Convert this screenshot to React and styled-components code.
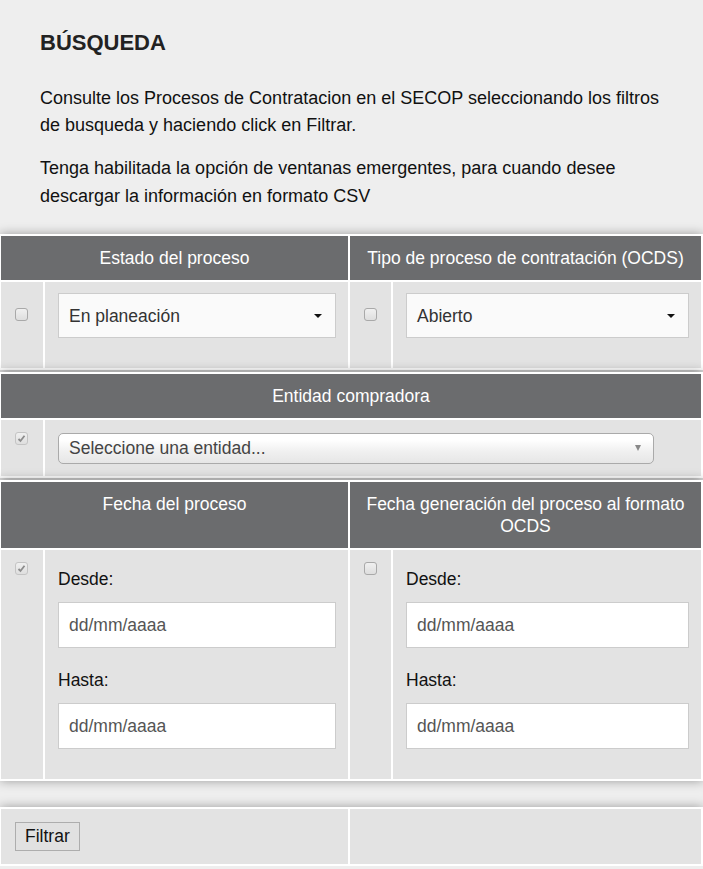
import styled, { createGlobalStyle } from "styled-components";

const GlobalStyle = createGlobalStyle`
  body {
    margin: 0;
    background: #eeeeee;
    font-family: "Liberation Sans", Arial, sans-serif;
    color: #111;
  }
`;

const Intro = styled.div`
  padding: 30px 40px 24px;
`;

const Title = styled.h2`
  margin: 0 0 29px;
  font-size: 22px;
  line-height: 26px;
  font-weight: bold;
  color: #222;
`;

const Text = styled.p`
  margin: 0 0 16px;
  font-size: 18px;
  line-height: 27.2px;
  &:last-child {
    margin-bottom: 0;
  }
`;

const Panel = styled.div`
  display: grid;
  grid-template-columns: 42px 303px 41px 1fr;
  gap: 2px;
  padding: 2px 2px 2px 1px;
  background: #fff;
  box-shadow: 0 0 10px rgba(0, 0, 0, 0.35);
  margin-top: ${(p) => p.$space || 0}px;
  position: relative;
`;

const Head = styled.div`
  grid-column: span ${(p) => p.$span || 2};
  background: #6b6c6e;
  color: #fff;
  text-align: center;
  font-size: 17.5px;
  line-height: 22px;
  padding: 11px 10px;
`;

const CheckCell = styled.div`
  background: #e3e3e3;
  padding: ${(p) => p.$top || 12}px 0 0 14px;
`;

const Cell = styled.div`
  grid-column: span ${(p) => p.$span || 1};
  background: #e3e3e3;
  padding: ${(p) => p.$pad || "11px 12px 30px 13px"};
`;

const Box = styled.span`
  display: block;
  width: 13px;
  height: 13px;
  box-sizing: border-box;
  border: 1px solid ${(p) => (p.$checked ? "#c4c4c4" : "#a9a9a9")};
  border-radius: 3px;
  background: linear-gradient(#f0f0f0, #dedede);
  svg {
    display: block;
  }
`;

const Dropdown = styled.div`
  height: 45px;
  box-sizing: border-box;
  border: 1px solid #cccccc;
  background: #fafafa;
  display: flex;
  align-items: center;
  justify-content: space-between;
  padding: 2px 13px 0 10px;
  font-size: 17.5px;
  color: #333;
`;

const Caret = styled.span`
  width: 0;
  height: 0;
  border-left: 4px solid transparent;
  border-right: 4px solid transparent;
  border-top: 4px solid #111;
`;

const EntitySelect = styled.div`
  width: 596px;
  height: 31px;
  box-sizing: border-box;
  border: 1px solid #aaaaaa;
  border-radius: 5px;
  background: linear-gradient(#ffffff 20%, #f0f0f0 60%, #e6e6e6);
  display: flex;
  align-items: center;
  justify-content: space-between;
  padding: 0 12px 0 10px;
  font-size: 17.5px;
  color: #444;
`;

const SmallArrow = styled.span`
  width: 0;
  height: 0;
  border-left: 3.5px solid transparent;
  border-right: 3.5px solid transparent;
  border-top: 6px solid #888;
`;

const Label = styled.div`
  margin: ${(p) => (p.$first ? 18 : 21)}px 0 12px;
  font-size: 17.5px;
  line-height: 22px;
  color: #111;
`;

const DateInput = styled.div`
  height: 46px;
  box-sizing: border-box;
  border: 1px solid #cccccc;
  background: #fff;
  display: flex;
  align-items: center;
  padding: 1px 10px 0;
  font-size: 17.5px;
  color: #555;
`;

const Button = styled.button`
  height: 29px;
  padding: 0 9px;
  border: 1px solid #adadad;
  background: #e1e1e1;
  font-family: "Liberation Sans", Arial, sans-serif;
  font-size: 17.5px;
  color: #111;
`;

function Check({ checked }) {
  return (
    <Box $checked={checked}>
      {checked && (
        <svg width="11" height="11" viewBox="0 0 11 11">
          <path d="M2.5 6 L4.5 8 L8.5 2.8" fill="none" stroke="#8c8c8c" strokeWidth="1.8" />
        </svg>
      )}
    </Box>
  );
}

function DateField() {
  return (
    <>
      <Label $first>Desde:</Label>
      <DateInput>dd/mm/aaaa</DateInput>
      <Label>Hasta:</Label>
      <DateInput>dd/mm/aaaa</DateInput>
    </>
  );
}

export default function App() {
  return (
    <>
      <GlobalStyle />
      <Intro>
        <Title>BÚSQUEDA</Title>
        <Text>
          Consulte los Procesos de Contratacion en el SECOP seleccionando los filtros de busqueda y
          haciendo click en Filtrar.
        </Text>
        <Text>
          Tenga habilitada la opción de ventanas emergentes, para cuando desee descargar la
          información en formato CSV
        </Text>
      </Intro>

      <Panel>
        <Head>Estado del proceso</Head>
        <Head>Tipo de proceso de contratación (OCDS)</Head>
        <CheckCell $top={26}>
          <Check />
        </CheckCell>
        <Cell>
          <Dropdown>
            En planeación
            <Caret />
          </Dropdown>
        </Cell>
        <CheckCell $top={26}>
          <Check />
        </CheckCell>
        <Cell>
          <Dropdown>
            Abierto
            <Caret />
          </Dropdown>
        </Cell>
      </Panel>

      <Panel $space={2}>
        <Head $span={4}>Entidad compradora</Head>
        <CheckCell>
          <Check checked />
        </CheckCell>
        <Cell $span={3} $pad="13px 12px 12px 13px">
          <EntitySelect>
            Seleccione una entidad...
            <SmallArrow />
          </EntitySelect>
        </Cell>
      </Panel>

      <Panel $space={2}>
        <Head>Fecha del proceso</Head>
        <Head>Fecha generación del proceso al formato OCDS</Head>
        <CheckCell>
          <Check checked />
        </CheckCell>
        <Cell $pad="0 12px 30px 13px">
          <DateField />
        </Cell>
        <CheckCell>
          <Check />
        </CheckCell>
        <Cell $pad="0 12px 30px 13px">
          <DateField />
        </Cell>
      </Panel>

      <Panel $space={26}>
        <Cell $span={2} $pad="13px 14px">
          <Button>Filtrar</Button>
        </Cell>
        <Cell $span={2} />
      </Panel>
    </>
  );
}
